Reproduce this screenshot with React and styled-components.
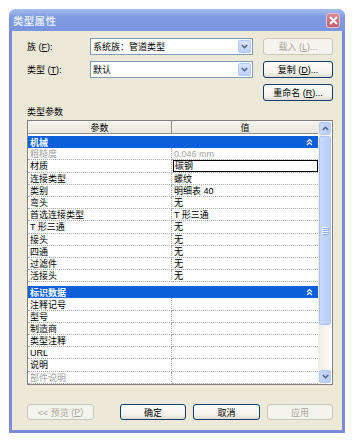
import React from "react";
import styled, { createGlobalStyle } from "styled-components";

const GlobalStyle = createGlobalStyle`
  html, body { margin: 0; padding: 0; background: #fff; }
  body {
    font-family: "Liberation Sans", "Noto Sans CJK SC", sans-serif;
    font-size: 9px;
    color: #000;
  }
  * { box-sizing: border-box; }
`;

const Page = styled.div`
  padding: 9px 0 0 9px;
`;

const Window = styled.div`
  width: 336px;
  background: #7b8ad9;
  border-radius: 7px 7px 0 0;
  padding: 0 3px 3px;
`;

const TitleBar = styled.div`
  height: 22px;
  margin: 0 -3px;
  border-radius: 7px 7px 0 0;
  background: linear-gradient(#a8bff0, #809be2 35%, #7a95df);
  display: flex;
  align-items: center;
  justify-content: space-between;
  padding: 0 5px 0 4px;
`;

const Title = styled.span`
  color: #dfe8fa;
  font-weight: bold;
  font-size: 10.5px;
  letter-spacing: 0.3px;
`;

const CloseBtn = styled.div`
  width: 14px;
  height: 15px;
  border-radius: 3px;
  border: 1px solid #e7c3c8;
  background: linear-gradient(#d48a95, #c0606f);
  display: flex;
  align-items: center;
  justify-content: center;
`;

const Body = styled.div`
  background: #ece9d8;
  padding: 7px 9px 10px 15px;
`;

const TopGrid = styled.div`
  display: grid;
  grid-template-columns: 53px 163px 1fr;
  grid-auto-rows: 17px;
  column-gap: 10px;
  row-gap: 6px;
  align-items: center;
`;

const Label = styled.span`
  white-space: nowrap;
`;

const Combo = styled.div`
  height: 17px;
  background: #fff;
  border: 1px solid #7f9db9;
  display: flex;
  align-items: center;
  justify-content: space-between;
  padding: 0 1px 0 2px;
`;

const DropBtn = styled.div`
  width: 13px;
  height: 13px;
  border: 1px solid #b4c8f6;
  border-radius: 2px;
  background: linear-gradient(#d9e4fd, #bccffa);
  display: flex;
  align-items: center;
  justify-content: center;
`;

const Button = styled.div`
  height: ${(p) => (p.$h ? p.$h : 17)}px;
  width: ${(p) => (p.$w ? `${p.$w}px` : "auto")};
  grid-column: ${(p) => p.$col || "auto"};
  border-radius: 3px;
  border: 1px solid ${(p) => (p.$disabled ? "#cac8bb" : "#003c74")};
  background: ${(p) =>
    p.$disabled ? "#f4f3ee" : "linear-gradient(#fefefd, #f3f2ec 70%, #dedcd1)"};
  color: ${(p) => (p.$disabled ? "#aca899" : "#000")};
  display: flex;
  align-items: center;
  justify-content: center;
  white-space: nowrap;
`;

const SectionLabel = styled.div`
  margin-top: 5px;
  height: 12px;
  line-height: 12px;
`;

const Table = styled.div`
  margin-top: 2px;
  width: 306px;
  height: 265px;
  border: 1px solid #7f7f7f;
  background: #fff;
  display: flex;
  overflow: hidden;
`;

const GridArea = styled.div`
  flex: 1;
  display: flex;
  flex-direction: column;
  overflow: hidden;
`;

const Header = styled.div`
  height: 13px;
  flex: none;
  display: grid;
  grid-template-columns: 144px 1fr;
  background: linear-gradient(#f6f5ef, #ebe9dd);
  border-bottom: 1px solid #8d8d8d;
`;

const HeadCell = styled.div`
  display: flex;
  align-items: center;
  justify-content: center;
  border-right: ${(p) => (p.$first ? "1px solid #8d8d8d" : "none")};
`;

const Rows = styled.div`
  padding-top: 2px;
  display: flex;
  flex-direction: column;
`;

const Band = styled.div`
  height: 12.2px;
  flex: none;
  background: #0b5fdb;
  color: #fff;
  font-weight: bold;
  display: flex;
  align-items: center;
  justify-content: space-between;
  padding: 0 5px 0 2px;
  margin-top: ${(p) => (p.$gap ? 4 : 0)}px;
`;

const Row = styled.div`
  height: 12.2px;
  flex: none;
  display: grid;
  grid-template-columns: 144px 1fr;
  color: ${(p) => (p.$muted ? "#a3a3a3" : "#000")};
`;

const Cell = styled.div`
  border-bottom: 1px dotted #a9a9a9;
  border-right: ${(p) => (p.$first ? "1px dotted #a9a9a9" : "none")};
  padding-left: 2px;
  display: flex;
  align-items: center;
  white-space: nowrap;
  overflow: hidden;
`;

const EditBox = styled.div`
  flex: 1;
  align-self: stretch;
  margin-left: -1px;
  border: 1px solid #000;
  display: flex;
  align-items: center;
  padding-left: 1px;
`;

const ScrollBar = styled.div`
  width: 14px;
  flex: none;
  display: flex;
  flex-direction: column;
  background: linear-gradient(90deg, #eeede5, #fdfdfa);
`;

const ScrollBtn = styled.div`
  height: 13px;
  flex: none;
  margin: 1px;
  border: 1px solid #b6c9f6;
  border-radius: 2px;
  background: linear-gradient(90deg, #c9d8fc, #b9cdfa);
  display: flex;
  align-items: center;
  justify-content: center;
`;

const Thumb = styled.div`
  height: 189px;
  flex: none;
  margin: 0 1px;
  border: 1px solid #adc3f5;
  border-radius: 2px;
  background: linear-gradient(90deg, #cad9fd, #b8cdfb);
  display: flex;
  align-items: center;
  justify-content: center;
`;

const Track = styled.div`
  flex: 1;
`;

const Footer = styled.div`
  margin-top: 19px;
  width: 306px;
  display: flex;
  justify-content: space-between;
`;

const FooterGroup = styled.div`
  display: flex;
  gap: 7px;
`;

const Chevron = ({ up }) => (
  <svg width="7" height="5" viewBox="0 0 7 5">
    <path
      d={up ? "M0.8 4 L3.5 1.3 L6.2 4" : "M0.8 1 L3.5 3.7 L6.2 1"}
      fill="none"
      stroke="#4d6185"
      strokeWidth="1.5"
    />
  </svg>
);

const Collapse = () => (
  <svg width="7" height="8" viewBox="0 0 7 8">
    <path
      d="M1 4 L3.5 1.5 L6 4 M1 7 L3.5 4.5 L6 7"
      fill="none"
      stroke="#fff"
      strokeWidth="1.2"
    />
  </svg>
);

const Grip = () => (
  <svg width="7" height="8" viewBox="0 0 7 8">
    {[0, 2, 4, 6].map((y) => (
      <g key={y}>
        <line x1="0" y1={y + 0.5} x2="6" y2={y + 0.5} stroke="#eef3fe" />
        <line x1="1" y1={y + 1.5} x2="7" y2={y + 1.5} stroke="#8ca8ea" />
      </g>
    ))}
  </svg>
);

const mech = [
  ["粗糙度", "0.046 mm", true],
  ["材质", "碳钢", false, true],
  ["连接类型", "螺纹"],
  ["类别", "明细表 40"],
  ["弯头", "无"],
  ["首选连接类型", "T 形三通"],
  ["T 形三通", "无"],
  ["接头", "无"],
  ["四通", "无"],
  ["过滤件", "无"],
  ["活接头", "无"],
];

const ident = [
  ["注释记号", ""],
  ["型号", ""],
  ["制造商", ""],
  ["类型注释", ""],
  ["URL", ""],
  ["说明", ""],
  ["部件说明", "", true],
];

const ParamRow = ({ name, value, muted, edit }) => (
  <Row $muted={muted}>
    <Cell $first>{name}</Cell>
    <Cell>{edit ? <EditBox>{value}</EditBox> : value}</Cell>
  </Row>
);

export default function App() {
  return (
    <Page>
      <GlobalStyle />
      <Window>
        <TitleBar>
          <Title>类型属性</Title>
          <CloseBtn>
            <svg width="9" height="9" viewBox="0 0 9 9">
              <path d="M1 1 L8 8 M8 1 L1 8" stroke="#fff" strokeWidth="1.8" />
            </svg>
          </CloseBtn>
        </TitleBar>
        <Body>
          <TopGrid>
            <Label>族 (<u>F</u>):</Label>
            <Combo>
              <span>系统族：管道类型</span>
              <DropBtn><Chevron /></DropBtn>
            </Combo>
            <Button $disabled>载入 (<u>L</u>)...</Button>
            <Label>类型 (<u>T</u>):</Label>
            <Combo>
              <span>默认</span>
              <DropBtn><Chevron /></DropBtn>
            </Combo>
            <Button>复制 (<u>D</u>)...</Button>
            <Button $col="3">重命名 (<u>R</u>)...</Button>
          </TopGrid>
          <SectionLabel>类型参数</SectionLabel>
          <Table>
            <GridArea>
              <Header>
                <HeadCell $first>参数</HeadCell>
                <HeadCell>值</HeadCell>
              </Header>
              <Rows>
                <Band>
                  <span>机械</span>
                  <Collapse />
                </Band>
                {mech.map(([n, v, m, e]) => (
                  <ParamRow key={n} name={n} value={v} muted={m} edit={e} />
                ))}
                <Band $gap>
                  <span>标识数据</span>
                  <Collapse />
                </Band>
                {ident.map(([n, v, m]) => (
                  <ParamRow key={n} name={n} value={v} muted={m} />
                ))}
              </Rows>
            </GridArea>
            <ScrollBar>
              <ScrollBtn><Chevron up /></ScrollBtn>
              <Thumb><Grip /></Thumb>
              <Track />
              <ScrollBtn><Chevron /></ScrollBtn>
            </ScrollBar>
          </Table>
          <Footer>
            <Button $w={67} $h={16} $disabled>&lt;&lt; 预览 (<u>P</u>)</Button>
            <FooterGroup>
              <Button $w={66} $h={16}>确定</Button>
              <Button $w={67} $h={16}>取消</Button>
              <Button $w={66} $h={16} $disabled>应用</Button>
            </FooterGroup>
          </Footer>
        </Body>
      </Window>
    </Page>
  );
}
